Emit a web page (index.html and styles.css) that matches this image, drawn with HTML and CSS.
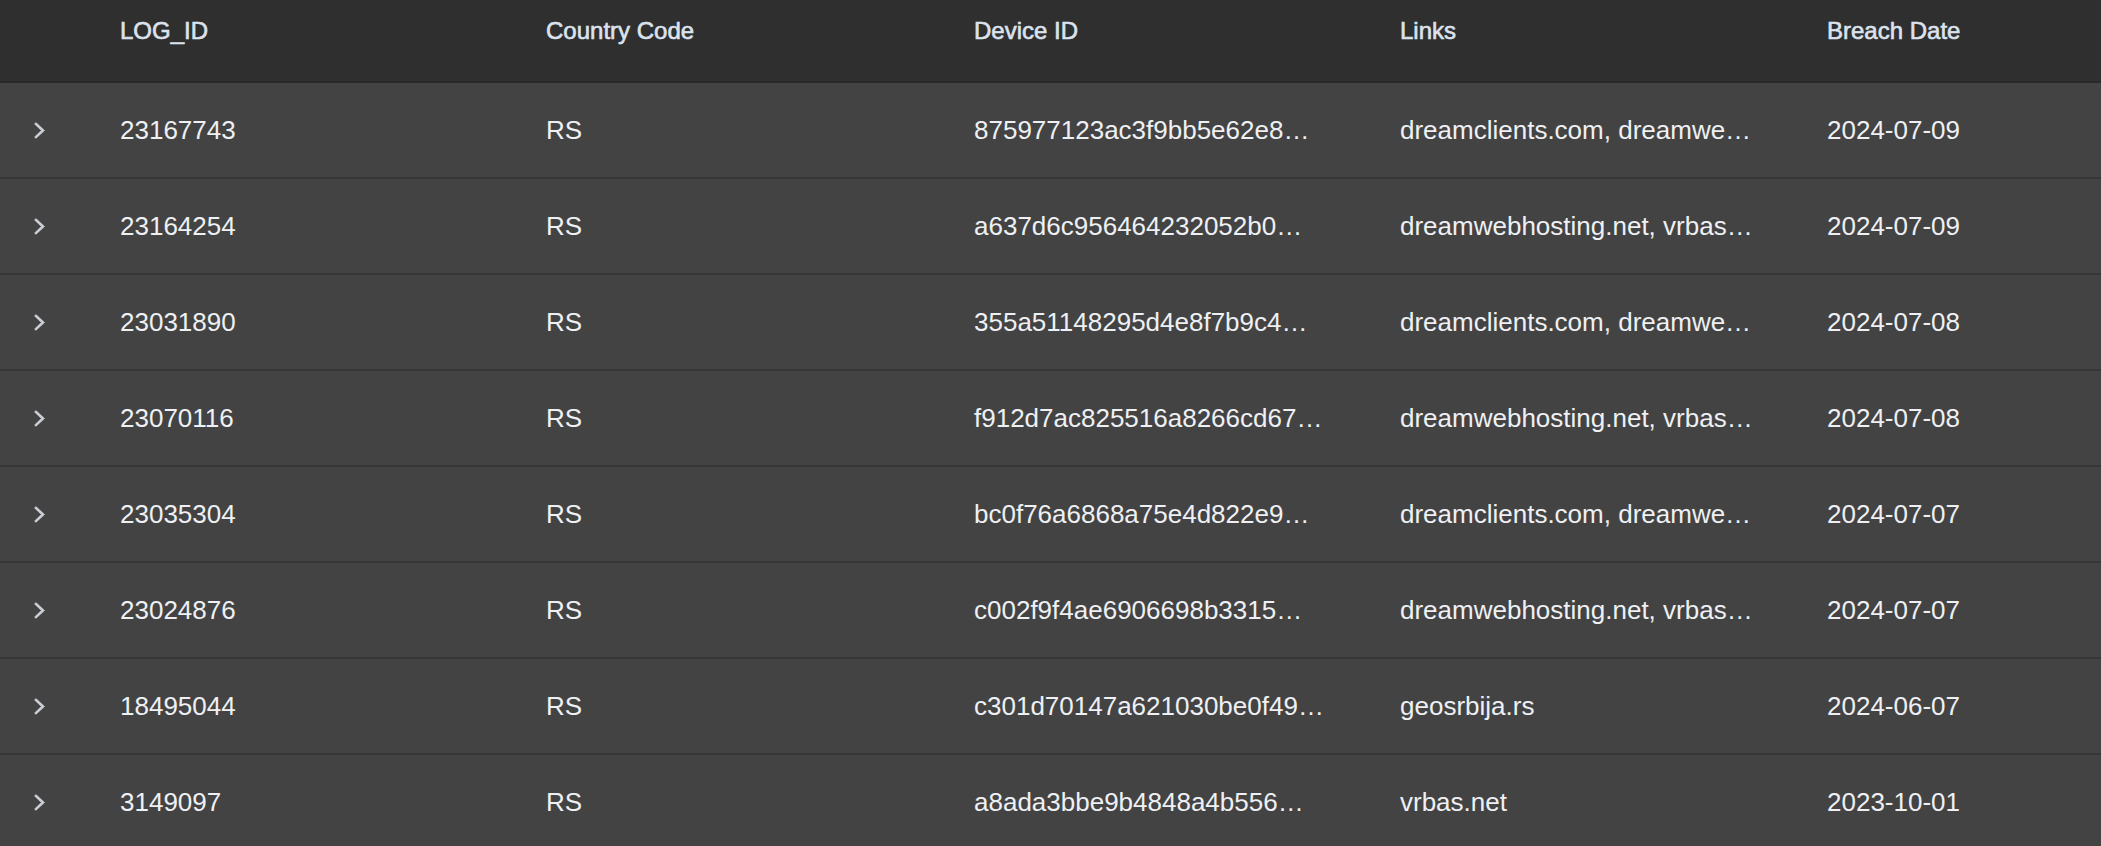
FILE: index.html
```html
<!DOCTYPE html>
<html lang="en">
<head>
<meta charset="utf-8">
<title>Breach logs</title>
<link rel="stylesheet" href="styles.css">
</head>
<body>
<div class="table">
  <div class="row head">
    <div class="cell expander"></div>
    <div class="cell">LOG_ID</div>
    <div class="cell">Country Code</div>
    <div class="cell">Device ID</div>
    <div class="cell">Links</div>
    <div class="cell">Breach Date</div>
  </div>

  <div class="row">
    <div class="cell expander"><svg class="chev" viewBox="0 0 11 17"><path d="M2 2 L9 8.5 L2 15"/></svg></div>
    <div class="cell">23167743</div>
    <div class="cell">RS</div>
    <div class="cell">875977123ac3f9bb5e62e8…</div>
    <div class="cell">dreamclients.com, dreamwe…</div>
    <div class="cell">2024-07-09</div>
  </div>

  <div class="row">
    <div class="cell expander"><svg class="chev" viewBox="0 0 11 17"><path d="M2 2 L9 8.5 L2 15"/></svg></div>
    <div class="cell">23164254</div>
    <div class="cell">RS</div>
    <div class="cell">a637d6c956464232052b0…</div>
    <div class="cell">dreamwebhosting.net, vrbas…</div>
    <div class="cell">2024-07-09</div>
  </div>

  <div class="row">
    <div class="cell expander"><svg class="chev" viewBox="0 0 11 17"><path d="M2 2 L9 8.5 L2 15"/></svg></div>
    <div class="cell">23031890</div>
    <div class="cell">RS</div>
    <div class="cell">355a51148295d4e8f7b9c4…</div>
    <div class="cell">dreamclients.com, dreamwe…</div>
    <div class="cell">2024-07-08</div>
  </div>

  <div class="row">
    <div class="cell expander"><svg class="chev" viewBox="0 0 11 17"><path d="M2 2 L9 8.5 L2 15"/></svg></div>
    <div class="cell">23070116</div>
    <div class="cell">RS</div>
    <div class="cell">f912d7ac825516a8266cd67…</div>
    <div class="cell">dreamwebhosting.net, vrbas…</div>
    <div class="cell">2024-07-08</div>
  </div>

  <div class="row">
    <div class="cell expander"><svg class="chev" viewBox="0 0 11 17"><path d="M2 2 L9 8.5 L2 15"/></svg></div>
    <div class="cell">23035304</div>
    <div class="cell">RS</div>
    <div class="cell">bc0f76a6868a75e4d822e9…</div>
    <div class="cell">dreamclients.com, dreamwe…</div>
    <div class="cell">2024-07-07</div>
  </div>

  <div class="row">
    <div class="cell expander"><svg class="chev" viewBox="0 0 11 17"><path d="M2 2 L9 8.5 L2 15"/></svg></div>
    <div class="cell">23024876</div>
    <div class="cell">RS</div>
    <div class="cell">c002f9f4ae6906698b3315…</div>
    <div class="cell">dreamwebhosting.net, vrbas…</div>
    <div class="cell">2024-07-07</div>
  </div>

  <div class="row">
    <div class="cell expander"><svg class="chev" viewBox="0 0 11 17"><path d="M2 2 L9 8.5 L2 15"/></svg></div>
    <div class="cell">18495044</div>
    <div class="cell">RS</div>
    <div class="cell">c301d70147a621030be0f49…</div>
    <div class="cell">geosrbija.rs</div>
    <div class="cell">2024-06-07</div>
  </div>

  <div class="row">
    <div class="cell expander"><svg class="chev" viewBox="0 0 11 17"><path d="M2 2 L9 8.5 L2 15"/></svg></div>
    <div class="cell">3149097</div>
    <div class="cell">RS</div>
    <div class="cell">a8ada3bbe9b4848a4b556…</div>
    <div class="cell">vrbas.net</div>
    <div class="cell">2023-10-01</div>
  </div>
</div>
</body>
</html>
```

FILE: styles.css
```css
html, body {
  margin: 0;
  padding: 0;
  background: #434343;
}

body {
  font-family: "Liberation Sans", Arial, sans-serif;
  color: #eef0f4;
  overflow: hidden;
}

.table {
  display: flex;
  flex-direction: column;
}

.row {
  display: grid;
  grid-template-columns: 104px 426px 428px 426px 427px 1fr;
  align-items: center;
  height: 94px;
  background: #434343;
  border-bottom: 2px solid #373737;
  font-size: 26px;
  line-height: 30px;
}

.cell {
  padding: 0 16px;
  white-space: nowrap;
  overflow: hidden;
}

.head {
  height: 81px;
  align-items: start;
  background: #2f2f2f;
  border-bottom: 2px solid #292929;
  font-size: 24px;
  line-height: 28px;
  color: #dde3ee;
}

.head .cell {
  padding-top: 17px;
  -webkit-text-stroke: 0.6px #dde3ee;
}

.expander {
  padding: 0 0 0 34px;
  display: flex;
  align-items: center;
}

.chev {
  width: 11px;
  height: 17px;
  display: block;
}

.chev path {
  fill: none;
  stroke: #c9cdd6;
  stroke-width: 2.6;
  stroke-linecap: square;
  stroke-linejoin: miter;
}
```
